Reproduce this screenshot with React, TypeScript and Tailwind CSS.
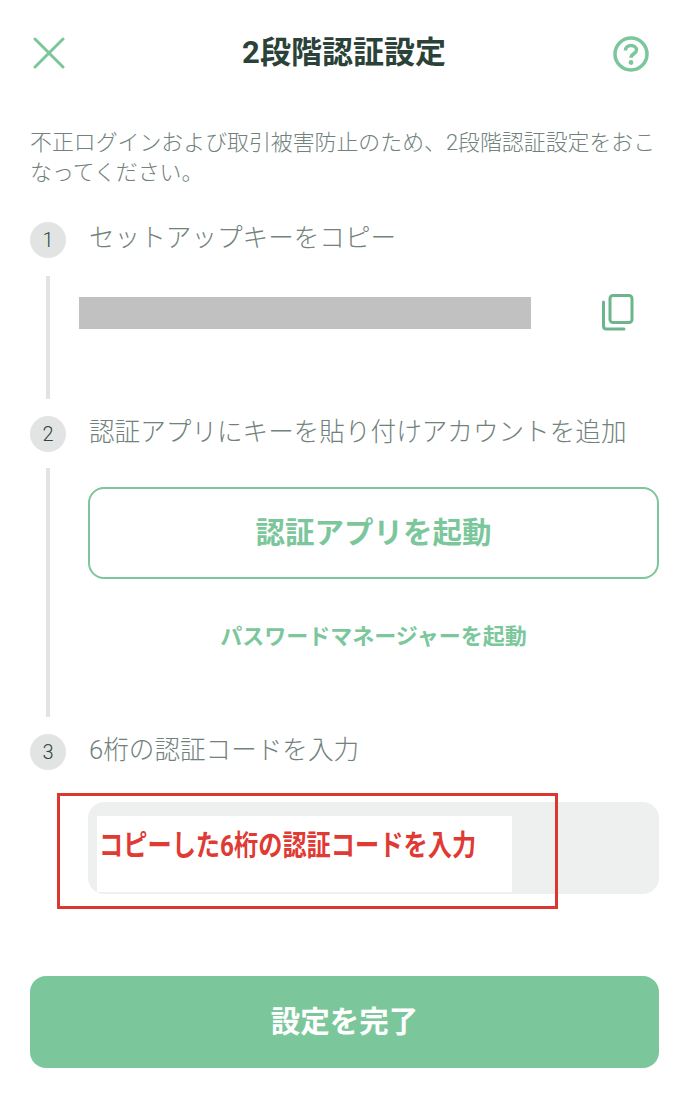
const fontFamily = 'font-["Roboto","Noto_Sans_CJK_JP",sans-serif]';

function StepHead({ n, label }: { n: number; label: string }) {
  return (
    <div className="flex items-center h-[37px]">
      <div className="w-[36px] h-[36px] rounded-full bg-[#e2e4e3] flex items-center justify-center text-[20px] font-light text-[#2f4640]">
        {n}
      </div>
      <div className="ml-[23px] -mt-[3px] text-[25.6px] leading-[36px] font-light text-[#71817c] whitespace-nowrap">{label}</div>
    </div>
  );
}

function Rail({ height, children }: { height: string; children?: React.ReactNode }) {
  return (
    <div className="flex">
      <div className={`w-[4px] ml-[16px] bg-[#e2e4e3] ${height}`} />
      <div className="flex-1 min-w-0">{children}</div>
    </div>
  );
}

export default function App() {
  return (
    <div className={`w-[685px] h-[1107px] bg-white overflow-hidden relative ${fontFamily}`}>
      <header className="grid grid-cols-[1fr_auto_1fr] items-center h-[54px] mt-[26px] pl-[33px] pr-[30px]">
        <svg width="32" height="32" viewBox="0 0 32 32" fill="none" stroke="#7bc79b" strokeWidth="3" strokeLinecap="round">
          <path d="M2 2l28 28M30 2L2 30" />
        </svg>
        <h1 className="text-[31px] font-bold text-[#2b4239]">2段階認証設定</h1>
        <svg className="justify-self-end mr-[6px] mt-[1px]" width="36" height="36" viewBox="0 0 36 36" fill="none">
          <circle cx="18" cy="18" r="16" stroke="#7bc79b" strokeWidth="3.500" />
          <path d="M12.500 14.500c0-3.200 2.400-5 5.500-5s5.500 1.900 5.500 4.500c0 3.800-5.500 3.800-5.500 7.800" stroke="#7bc79b" strokeWidth="3.500" />
          <circle cx="18" cy="26.500" r="2.400" fill="#7bc79b" />
        </svg>
      </header>

      <p className="mt-[48px] ml-[30px] mr-[26px] text-[21.900px] leading-[30px] font-light text-[#71817c]">
        不正ログインおよび取引被害防止のため、2段階認証設定をおこなってください。
      </p>

      <div className="ml-[30px] mr-[26px] mt-[33px]">
        <StepHead n={1} label="セットアップキーをコピー" />
        <div className="mt-[18px]">
          <Rail height="h-[123px]">
            <div className="flex items-start pl-[29px] pt-[19px]">
              <div className="w-[452px] h-[32px] mt-[2px] bg-[#c1c1c1]" />
              <svg className="ml-[71px] -mt-[1px]" width="32" height="37" viewBox="0 0 32 37" fill="none" stroke="#6db58d" strokeWidth="3" strokeLinecap="round">
                <rect x="8" y="1.500" width="22" height="27" rx="3" />
                <path d="M1.500 8v24c0 2 1 3 3 3H22" />
              </svg>
            </div>
          </Rail>
        </div>

        <div className="mt-[16px]">
          <StepHead n={2} label="認証アプリにキーを貼り付けアカウントを追加" />
        </div>
        <div className="mt-[16px]">
          <Rail height="h-[249px]">
            <div className="pl-[38px] pt-[19px]">
              <div className="h-[92px] rounded-[16px] border-2 border-[#7bc79b] flex items-center justify-center text-[29.500px] font-bold text-[#7bc79b]">
                認証アプリを起動
              </div>
              <div className="mt-[42px] text-center text-[22px] leading-[32px] font-bold text-[#7bc79b]">
                パスワードマネージャーを起動
              </div>
            </div>
          </Rail>
        </div>

        <div className="mt-[16px]">
          <StepHead n={3} label="6桁の認証コードを入力" />
        </div>

        <div className="ml-[58px] mt-[32px] h-[92px] rounded-[16px] bg-[#eef0f0] pl-[9px] pt-[14px]">
          <div className="w-[415px] h-[76px] bg-white pl-[2px] pt-[11px] text-[29px] leading-[38px] font-bold text-[#df3a33] whitespace-nowrap">
            <span className="inline-block origin-left scale-x-[0.835]">コピーした6桁の認証コードを入力</span>
          </div>
        </div>

        <button className="mt-[82px] w-full h-[92px] rounded-[16px] bg-[#7bc79b] text-white text-[29.500px] font-bold">
          設定を完了
        </button>
      </div>

      <div className="absolute left-[57px] top-[793px] w-[501px] h-[116px] border-[3px] border-[#dd3530]" />
    </div>
  );
}
